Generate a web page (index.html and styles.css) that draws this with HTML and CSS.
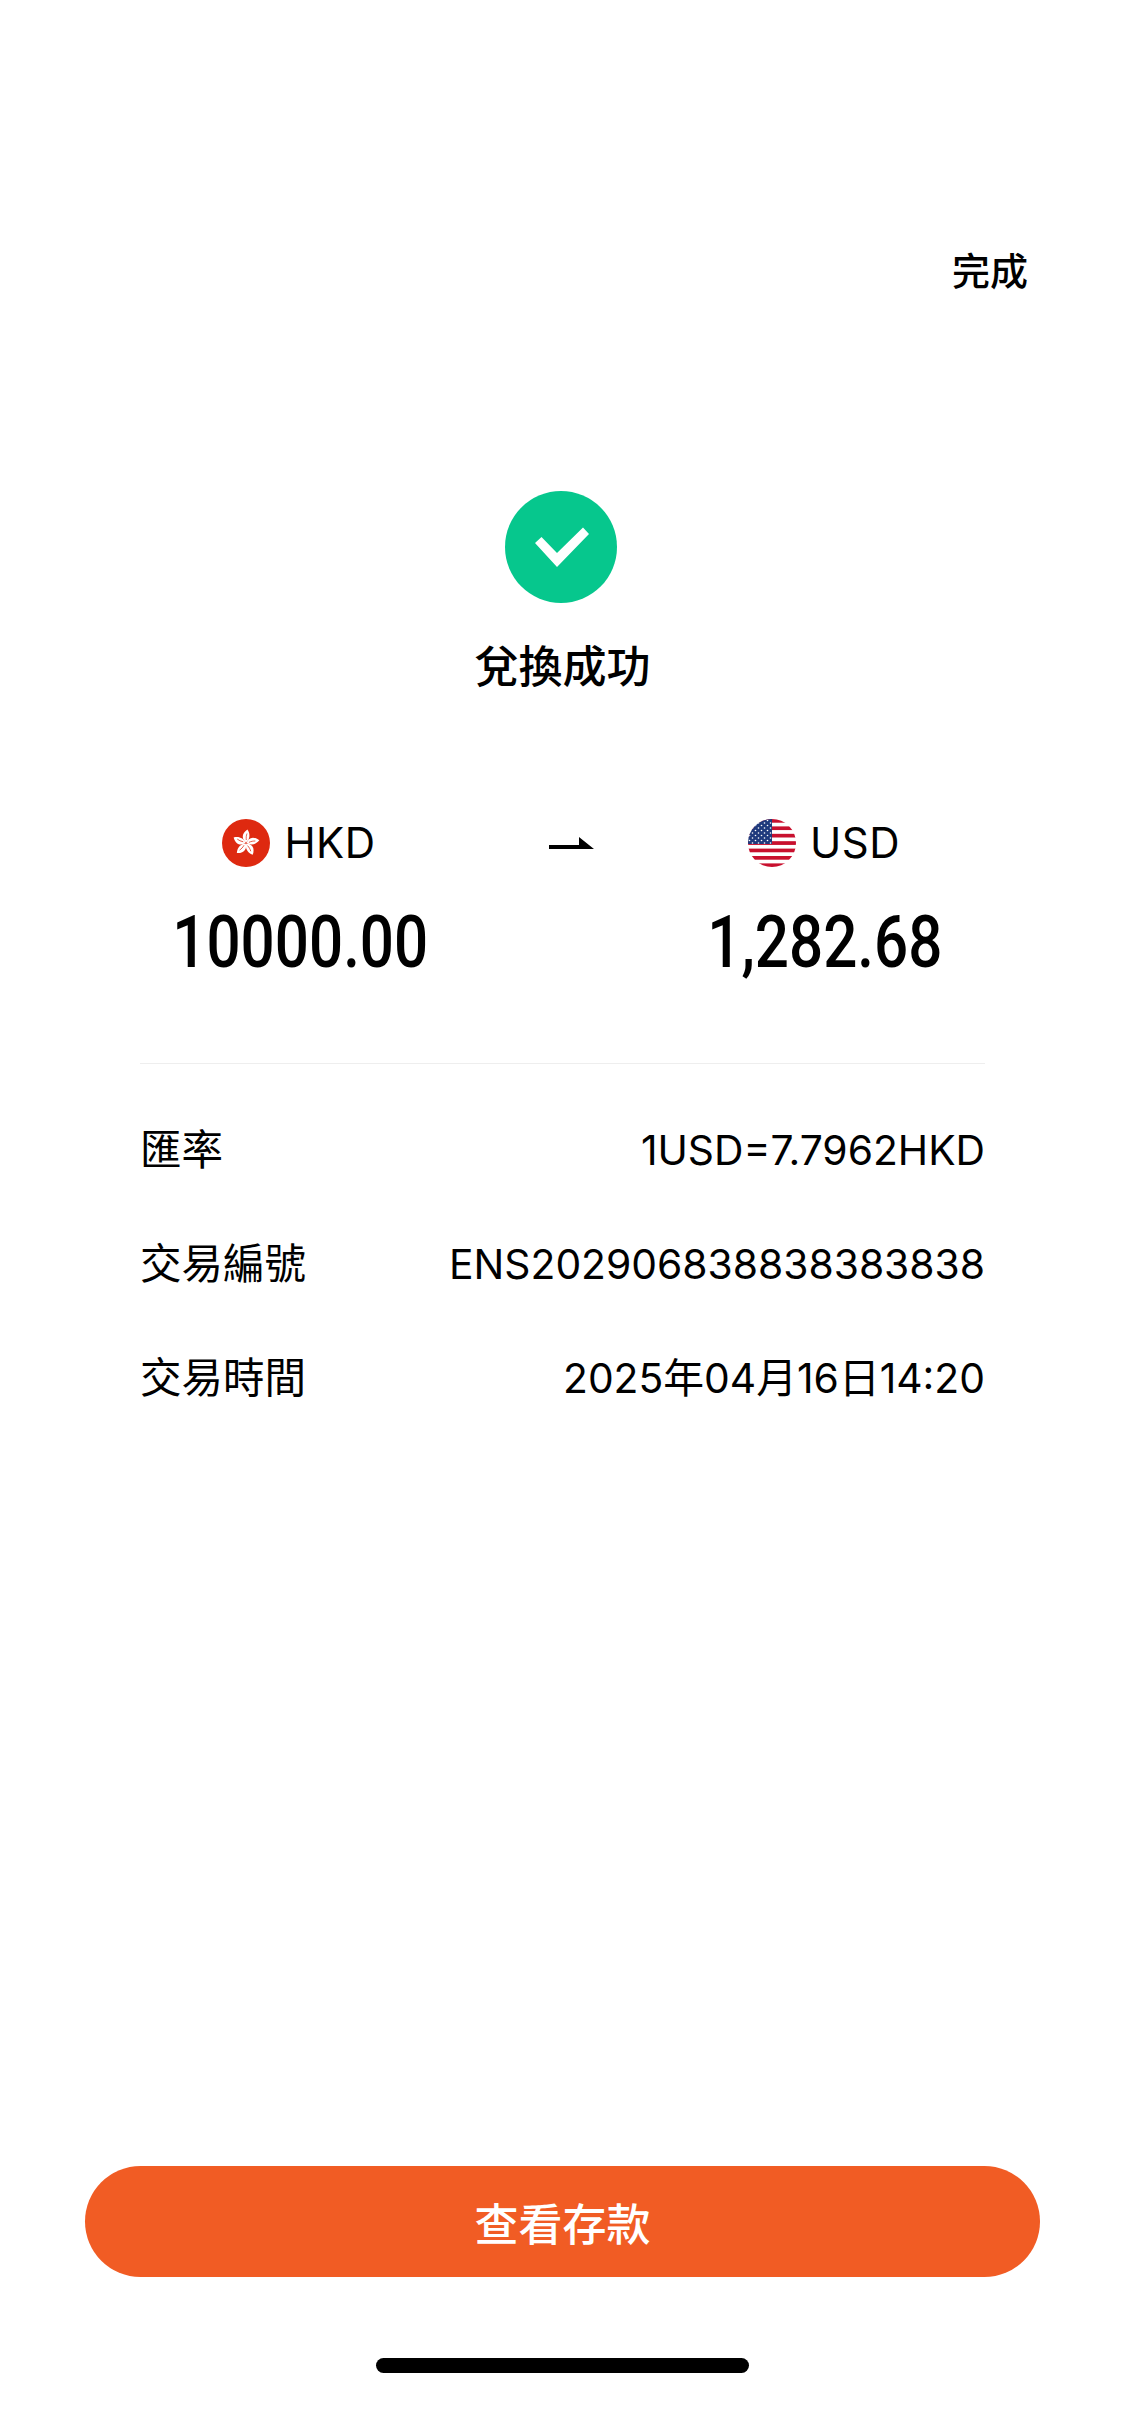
FILE: index.html
```html
<!DOCTYPE html>
<html lang="zh-Hant">
<head>
  <meta charset="UTF-8">
  <meta name="viewport" content="width=device-width, initial-scale=1.0">
  <title>兌換成功</title>
  <link rel="stylesheet" href="styles.css">
</head>
<body>
  <div class="page">
    <div class="header">
      <span class="done">完成</span>
    </div>

    <div class="status">
      <svg class="status-icon" viewBox="0 0 112 112">
        <circle cx="56" cy="56" r="56" fill="#06c78d"/>
        <polygon fill="#fff" points="30,52 36.500,46 52,62 78,36.500 84,43 52,76"/>
      </svg>
      <h1 class="status-title">兌換成功</h1>
    </div>

    <div class="exchange">
      <div class="side">
        <div class="currency">
          <svg class="flag" viewBox="0 0 48 48">
            <defs>
              <g id="petal">
                <path fill="#fff" d="M24 23.500C20 20.500 18.800 15 25.500 10.500C28.500 15 28 20.500 24 23.500Z"/>
                <path fill="none" stroke="#de2910" stroke-width="0.700" d="M24.300 21C24 18.500 24.300 16.500 25 14.500"/>
              </g>
            </defs>
            <circle cx="24" cy="24" r="24" fill="#de2910"/>
            <use href="#petal"/>
            <use href="#petal" transform="rotate(72 24 24)"/>
            <use href="#petal" transform="rotate(144 24 24)"/>
            <use href="#petal" transform="rotate(216 24 24)"/>
            <use href="#petal" transform="rotate(288 24 24)"/>
          </svg>
          <span>HKD</span>
        </div>
        <div class="amount">10000.00</div>
      </div>

      <svg class="arrow" viewBox="0 0 45 12">
        <polygon fill="#000" points="0,8 30,8 30,0 45,12 0,12"/>
      </svg>

      <div class="side">
        <div class="currency">
          <svg class="flag" viewBox="0 0 48 48">
            <defs>
              <clipPath id="round"><circle cx="24" cy="24" r="24"/></clipPath>
              <pattern id="stripes" width="48" height="7.400" patternUnits="userSpaceOnUse">
                <rect width="48" height="3.700" fill="#c8102e"/>
                <rect y="3.700" width="48" height="3.700" fill="#fff"/>
              </pattern>
              <pattern id="stars" width="6" height="5" patternUnits="userSpaceOnUse">
                <circle cx="1.500" cy="1.500" r="0.800" fill="#fff"/>
                <circle cx="4.500" cy="4" r="0.800" fill="#fff"/>
              </pattern>
            </defs>
            <g clip-path="url(#round)">
              <rect width="48" height="48" fill="url(#stripes)"/>
              <rect width="24" height="25" fill="#1f3a7d"/>
              <rect width="24" height="25" fill="url(#stars)"/>
            </g>
          </svg>
          <span>USD</span>
        </div>
        <div class="amount">1,282.68</div>
      </div>
    </div>

    <div class="details">
      <div class="row"><span class="label">匯率</span><span>1USD=7.7962HKD</span></div>
      <div class="row"><span class="label">交易編號</span><span>ENS202906838838383838</span></div>
      <div class="row"><span class="label">交易時間</span><span>2025年04月16日14:20</span></div>
    </div>

    <button class="primary-btn">查看存款</button>
    <div class="home-bar"></div>
  </div>
</body>
</html>
```

FILE: styles.css
```css
* {
  box-sizing: border-box;
}
body {
  margin: 0;
  background-color: #fff;
  color: #000;
  font-family: Inter, "Noto Sans CJK TC", sans-serif;
}
.page {
  width: 1125px;
  height: 2436px;
  display: flex;
  flex-direction: column;
  overflow: hidden;
}
.header {
  display: flex;
  justify-content: flex-end;
  padding: 247px 97px 0 0;
}
.done {
  font-size: 38px;
  font-weight: 500;
  line-height: 48px;
}
.status {
  display: flex;
  flex-direction: column;
  align-items: center;
  margin-top: 196px;
}
.status-icon {
  width: 112px;
  height: 112px;
  display: block;
  margin-right: 3px;
}
.status-title {
  margin: 34px 0 0;
  font-size: 44px;
  font-weight: 500;
  line-height: 60px;
}
.exchange {
  display: grid;
  grid-template-columns: 320px 1fr 320px;
  align-items: start;
  margin: 121px 140px 0;
  padding-bottom: 80px;
  border-bottom: 1px solid #eee;
}
.side {
  display: flex;
  flex-direction: column;
  align-items: center;
}
.currency {
  display: flex;
  align-items: center;
  gap: 14px;
  margin-left: -2px;
  font-size: 42px;
  letter-spacing: 0.5px;
  line-height: 50px;
}
.flag {
  width: 48px;
  height: 48px;
  display: block;
}
.arrow {
  width: 45px;
  height: 12px;
  justify-self: center;
  margin: 19px 0 0 18px;
}
.amount {
  margin-top: 35px;
  font-family: Roboto, sans-serif;
  font-size: 72px;
  font-weight: 500;
  line-height: 80px;
  transform: scaleX(0.835);
}
.details {
  display: flex;
  flex-direction: column;
  gap: 54px;
  padding: 56px 140px 0;
}
.row {
  display: flex;
  justify-content: space-between;
  font-size: 40.800px;
  line-height: 60px;
}
.label {
  font-size: 41.500px;
}
.primary-btn {
  display: block;
  width: 955px;
  height: 111px;
  margin: auto 0 0 85px;
  border: none;
  border-radius: 56px;
  background-color: #f15c24;
  color: #fff;
  font-family: inherit;
  font-size: 44px;
  font-weight: 500;
}
.home-bar {
  width: 373px;
  height: 15px;
  margin: 81px 0 63px 376px;
  border-radius: 8px;
  background-color: #000;
}
```
